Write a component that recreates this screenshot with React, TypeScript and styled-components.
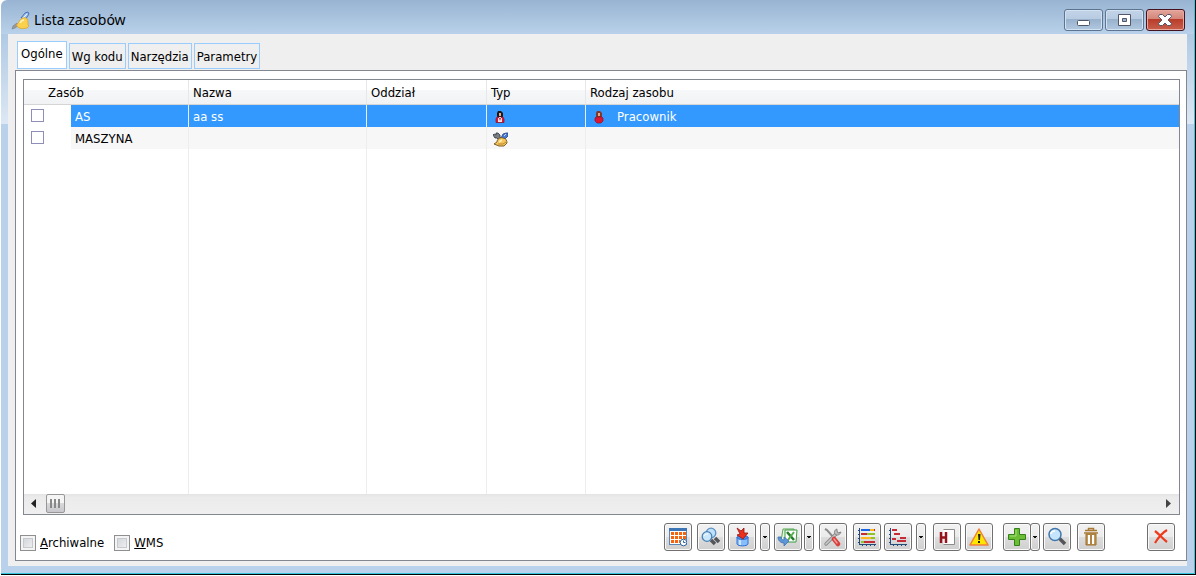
import React from "react";
import styled, { createGlobalStyle, css } from "styled-components";

const GlobalStyle = createGlobalStyle`
  * { box-sizing: border-box; }
  body {
    margin: 0;
    background: #fff;
    color: #000;
    font-family: "DejaVu Sans Condensed", Tahoma, "Noto Sans", sans-serif;
    font-size: 13px;
    line-height: 16px;
  }
  button, input { font: inherit; margin: 0; }
`;

const Desktop = styled.div`
  height: 100vh;
  padding: 0 0 1px 1px;
  background: #fff;
`;

const Frame = styled.div`
  height: 100%;
  display: flex;
  flex-direction: column;
  padding: 0 8px 8px 7px;
  border-right: 1px solid #000;
  border-bottom: 1px solid #000;
  border-top-left-radius: 6px;
  box-shadow: inset -1px -1px 0 #35c5dc;
  background:
    linear-gradient(transparent 34px, #b0cae4 34px, #dce8f4 124px, transparent 124px) left / 7px 100% no-repeat,
    linear-gradient(transparent 34px, #b0cae4 34px, #dce8f4 124px, transparent 124px) right / 8px 100% no-repeat,
    linear-gradient(#98b4d2, #b9d1ea 34px);
`;

const TitleBar = styled.header`
  display: flex;
  align-items: center;
  gap: 4px;
  height: 34px;
  padding: 6px 2px 0 3px;
`;

const Title = styled.h1`
  flex: 1;
  margin: 0;
  font: 14px/20px "Noto Sans", "Open Sans", sans-serif;
`;

const WindowButtons = styled.div`
  display: flex;
  gap: 2px;
`;

const WindowButton = styled.button<{ $close?: boolean }>`
  display: flex;
  align-items: center;
  justify-content: center;
  width: 39px;
  height: 22px;
  padding: 0 1px 0 0;
  border: 1px solid ${(p) => (p.$close ? "#43141f" : "#5c7591")};
  border-radius: 3px;
  box-shadow: inset 0 0 0 1px ${(p) => (p.$close ? "#e9a9a0" : "#d4e1f0")};
  background: ${(p) =>
    p.$close
      ? "linear-gradient(#e3a69c 0, #d48578 45%, #b83c29 46%, #c8604c 100%)"
      : "linear-gradient(#c3d4e8 0, #b7cbe1 45%, #98b1cc 46%, #b1c8e0 100%)"};
`;

const Client = styled.main`
  flex: 1;
  min-height: 0;
  display: flex;
  flex-direction: column;
  padding: 8px 0 5px 7px;
  background: #efefef;
`;

const Tabs = styled.div`
  display: flex;
  align-items: flex-end;
  gap: 2px;
  height: 28px;
  padding: 0 2px 1px;
`;

const Tab = styled.button<{ $active?: boolean }>`
  height: ${(p) => (p.$active ? 28 : 26)}px;
  padding: ${(p) => (p.$active ? "0 3px 2px" : "2px 2px 0")};
  border: 1px solid #99ccff;
  background: ${(p) => (p.$active ? "#fff" : "#efefef")};
  color: #000;
`;

const Panel = styled.section`
  flex: 1;
  min-height: 0;
  display: flex;
  flex-direction: column;
  padding: 8px 6px 0 7px;
  border: 1px solid #828790;
  background: #fff;
`;

const ListBox = styled.div`
  flex: 1;
  min-height: 0;
  display: flex;
  flex-direction: column;
  border: 1px solid #828790;
`;

const GridArea = styled.div`
  flex: 1;
  min-height: 0;
`;

const Grid = styled.table`
  width: 100%;
  height: 100%;
  table-layout: fixed;
  border-collapse: separate;
  border-spacing: 0;
`;

const HeadCell = styled.th<{ $first?: boolean }>`
  height: 25px;
  padding: 2px 4px 0 ${(p) => (p.$first ? 24 : 4)}px;
  border-right: 1px solid #e6e7e9;
  border-bottom: 1px solid #d5d5d5;
  background: linear-gradient(#fff 40%, #f7f8fa 41%, #f1f2f4);
  font-weight: normal;
  text-align: left;
  &:last-child { border-right: 0; }
`;

const Cell = styled.td<{ $state?: "selected" | "odd" }>`
  height: 22px;
  padding: 2px 4px 0;
  border-right: 1px solid #ededed;
  white-space: nowrap;
  &:last-child { border-right: 0; }
  ${(p) => p.$state === "selected" && css`background: #3399ff; color: #fff;`}
  ${(p) => p.$state === "odd" && css`background: #f7f7f7;`}
`;

const CheckCell = styled.td`
  height: 22px;
  padding: 0 7px 2px;
  background: #fff;
`;

const FillCell = styled.td`
  border-right: 1px solid #ededed;
  &:last-child { border-right: 0; }
`;

const CellContent = styled.span<{ $inset: number }>`
  display: flex;
  align-items: center;
  gap: 12px;
  padding-left: ${(p) => p.$inset}px;
`;

const RowCheck = styled.input`
  appearance: none;
  display: block;
  width: 13px;
  height: 13px;
  border: 1px solid #8e8fb8;
  background: #fff;
  &:checked { background: #3399ff; }
`;

const ScrollBar = styled.div`
  display: flex;
  align-items: flex-start;
  height: 20px;
  padding-right: 2px;
  background: linear-gradient(#e3e3e3, #ebebeb 3px, #efefef);
`;

const ScrollArrow = styled.button`
  display: flex;
  align-items: center;
  justify-content: center;
  width: 18px;
  height: 18px;
  padding: 0;
  border: 0;
  background: none;
`;

const ScrollTrack = styled.div`
  flex: 1;
  padding-left: 4px;
`;

const ScrollThumb = styled.div`
  display: flex;
  align-items: center;
  justify-content: center;
  width: 19px;
  height: 19px;
  border: 1px solid #979797;
  border-radius: 2px;
  background: linear-gradient(#f5f5f5 45%, #dadadc 46%, #c8c8cc);
`;

const Footer = styled.footer`
  display: flex;
  align-items: flex-start;
  justify-content: space-between;
  height: 45px;
  padding: 8px 5px 0 0;
`;

const Options = styled.div`
  display: flex;
  gap: 10px;
  margin-left: -3px;
  padding-top: 12px;
`;

const Option = styled.label`
  display: flex;
  align-items: center;
  gap: 4px;
`;

const OptionCheck = styled.input`
  appearance: none;
  width: 16px;
  height: 16px;
  border: 1px solid #8e8f8f;
  box-shadow: inset 0 0 0 2px #f4f4f4, inset 0 0 0 3px #c6cace;
  background: linear-gradient(135deg, #cbcfd5, #f6f6f6);
`;

const Toolbar = styled.div`
  display: flex;
  align-items: center;
`;

const ToolGroup = styled.div<{ $space?: number; $gap?: number }>`
  display: flex;
  gap: ${(p) => p.$gap ?? 0}px;
  margin-left: ${(p) => p.$space ?? 0}px;
`;

const ToolButton = styled.button<{ $drop?: boolean; $joined?: boolean }>`
  display: flex;
  align-items: center;
  justify-content: center;
  width: ${(p) => (p.$drop ? 10 : 28)}px;
  height: 28px;
  padding: 0;
  margin-left: ${(p) => (p.$joined ? -1 : 0)}px;
  border: 1px solid #707070;
  border-radius: 3px;
  box-shadow: inset 0 0 0 1px #fafafa;
  background: linear-gradient(#f2f2f2 0, #ebebeb 48%, #dddddd 50%, #cfcfcf 100%);
  svg { flex: none; }
`;

function Drop({ label, joined }: { label: string; joined?: boolean }) {
  return (
    <ToolButton $drop $joined={joined} aria-label={label}>
      <svg width="6" height="4" viewBox="0 0 6 4"><path d="M1 1h4v1H4v1H2V2H1z" fill="#111" /></svg>
    </ToolButton>
  );
}

const HelmetIcon = () => (
  <svg width="19" height="19" viewBox="0 0 19 19">
    <path d="M1 18l1-3 4-3 2 2-4 3z" fill="#9a9a9a" stroke="#7f8286" strokeWidth=".7" />
    <path d="M10 7l4-5 3-1 1 2-4 6z" fill="#9fc2ef" stroke="#4470b4" />
    <path d="M12 7l4-4" stroke="#e9f3ff" />
    <path d="M6 15c-1-2 1-2 2-4 1-3 4-5 7-4 2 1 2 4 2 7l1 1-2 2c-4 1-8 1-10-2z" fill="#fbd04c" stroke="#dba633" strokeWidth=".8" />
    <path d="M9 12c1-2 2-3 4-3" stroke="#fff1b8" strokeWidth="1.600" fill="none" />
  </svg>
);

const MachineIcon = () => (
  <svg width="15" height="15" viewBox="0 0 15 15">
    <path d="M0 3l1-1 2 1V1h2l2 2v2l2 2-2 2-3-3H2z" fill="#7a7f84" stroke="#30363c" strokeWidth=".8" />
    <path d="M8 6l2-4 3-1h2v3l-3 3-3 1z" fill="#4a7ad2" stroke="#1f4288" strokeWidth=".8" />
    <path d="M11 4l2-2" stroke="#c3daff" />
    <path d="M1 12l3-2c0-3 3-5 6-4 3 0 4 3 4 5l-3 3H6z" fill="#f7c65a" stroke="#70501b" strokeWidth=".9" />
    <path d="M6 10l3-2" stroke="#fff0b5" strokeWidth="1.600" />
    <path d="M5 12h5l3-2" stroke="#a8762a" strokeWidth=".8" fill="none" />
  </svg>
);

const PersonIcon = ({ round }: { round?: boolean }) => (
  <svg width="12" height="14" viewBox="0 0 12 14">
    <path d="M3 8V3l1-2h3l2 2v5z" fill={round ? "#7d3a2c" : "#1c1719"} />
    <path d={round ? "M2 8l1-1h6l1 1v3l-2 2H4l-2-2z" : "M2 12.500V9l1-2h6l1 2v3.500z"} fill="#dc1533" stroke="#8a1325" strokeWidth=".7" />
    <path d="M5 3h2v3H5z" fill="#e9a98a" />
    {!round && <path d="M5 7h2v1h1v4H4V8h1z" fill="#f6e4e6" />}
    {!round && <path d="M5 8h2l-1 3z" fill="#dc1533" />}
  </svg>
);

const CalendarIcon = () => (
  <svg width="18" height="20" viewBox="0 0 18 20">
    <rect x=".5" y="1.500" width="17" height="16" fill="#fff" stroke="#5b86b8" />
    <path d="M0 1h18v3H0z" fill="#3c75b5" />
    <path d="M2 6.500h15M2 10.500h15M2 14.500h9" stroke="#f5640f" strokeWidth="3" strokeDasharray="3 1" />
    <circle cx="14.500" cy="15.500" r="3.300" fill="#fff" stroke="#2f659f" />
    <path d="M14.500 13.500v2h2" stroke="#2f659f" fill="none" />
  </svg>
);

const DoubleLensIcon = () => (
  <svg width="20" height="20" viewBox="0 0 20 20">
    <path d="M10 13l4 4M14 11l4 4" stroke="#55565a" strokeWidth="3.500" />
    <circle cx="10" cy="6" r="4.800" fill="#bfe0fa" stroke="#5b90c2" strokeWidth="1.300" />
    <circle cx="6" cy="9.500" r="4.800" fill="#cae7fc" stroke="#4a80b4" strokeWidth="1.300" />
    <path d="M3 9c1-2 2-2 4-2" stroke="#fff" fill="none" />
  </svg>
);

const ImportIcon = () => (
  <svg width="18" height="20" viewBox="0 0 18 20">
    <path d="M4 10v7c1 2.500 10 2.500 11 0v-7z" fill="#86bdfb" stroke="#2b6ed3" />
    <path d="M7 12v6" stroke="#cfe5ff" strokeWidth="2" />
    <ellipse cx="9.500" cy="10.500" rx="5.500" ry="2" fill="#4d8fe8" stroke="#2b6ed3" />
    <path d="M4 1l4 3 3-3v5h4l-5 6-6-4 3-1z" fill="#e8301c" stroke="#9c1010" strokeWidth=".8" />
  </svg>
);

const ExcelIcon = () => (
  <svg width="22" height="20" viewBox="0 0 22 20">
    <path d="M6 2h11v12H4z" fill="#e4f4e0" stroke="#58a653" />
    <path d="M8 3h12l-1 12H8z" fill="#fff" stroke="#3a9a3c" />
    <path d="M10 5l7 8" stroke="#237a2a" strokeWidth="2.500" />
    <path d="M17 5l-6 8" stroke="#55b04c" strokeWidth="2" />
    <path d="M1 10c0 4 3 6 6 6v3l5-5-5-4v3c-2 0-3-1-3-3z" fill="#5e97d8" stroke="#3d71b3" strokeWidth=".8" />
  </svg>
);

const ToolsIcon = () => (
  <svg width="20" height="20" viewBox="0 0 20 20">
    <path d="M2 2l2 1 7 8" stroke="#8c8c8c" strokeWidth="2" fill="none" />
    <path d="M3 17L13 7" stroke="#8a8a8a" strokeWidth="3.400" strokeLinecap="round" />
    <path d="M3 17L13 7" stroke="#c9c9c9" strokeWidth="1.600" strokeLinecap="round" />
    <path d="M14 2c-3 1-3 4-2 5 2 2 5 1 6-2l-3 1-1-2z" fill="#bdbdbd" stroke="#858585" />
    <path d="M11 12l4 5" stroke="#d63f3b" strokeWidth="4.500" strokeLinecap="round" />
    <path d="M11 12l3 4" stroke="#f49a94" strokeWidth="1.500" strokeLinecap="round" />
  </svg>
);

const ChartAxes = () => (
  <path d="M2 1h1v16h16v1H2zM1 3h1v1H1zM1 7h1v1H1zM1 11h1v1H1zM1 15h1v1H1zM5 18h1v1H5zM9 18h1v1H9zM13 18h1v1h-1zM17 18h1v1h-1z" fill="#244c78" />
);

const BarsIcon = () => (
  <svg width="20" height="20" viewBox="0 0 20 20">
    <ChartAxes />
    <path d="M4 3h9" stroke="#1764e8" strokeWidth="2" />
    <path d="M13 3h4M4 11h10" stroke="#ffba17" strokeWidth="2" />
    <path d="M4 7h6M6 15h12" stroke="#c72b35" strokeWidth="2" />
    <path d="M10 7h8M14 11h4M4 15h3" stroke="#8cc42a" strokeWidth="2" />
    <path d="M17 3h1" stroke="#c72b35" strokeWidth="2" />
  </svg>
);

const GanttIcon = () => (
  <svg width="20" height="20" viewBox="0 0 20 20">
    <ChartAxes />
    <path d="M4 3h5M6 7h6M12 11h6M9 14h9M4 12h4" stroke="#c72b35" strokeWidth="2" />
  </svg>
);

const HIcon = () => (
  <svg width="18" height="18" viewBox="0 0 18 18">
    <path d="M5.500 1.500h11v15h-11" fill="#fff" stroke="#8b8b8b" />
    <path d="M3 4v11M8 4v11M3 9.500h5" stroke="#98141c" strokeWidth="2.500" />
  </svg>
);

const WarnIcon = () => (
  <svg width="22" height="20" viewBox="0 0 22 20">
    <path d="M11 2l9 16H2z" fill="#ffe600" stroke="#f07f3c" strokeWidth="1.500" strokeLinejoin="round" />
    <path d="M10 7h2.500l-.5 6h-1.500zM10 14h2v2h-2z" fill="#222" />
  </svg>
);

const PlusIcon = () => (
  <svg width="20" height="20" viewBox="0 0 20 20">
    <path d="M7.500 1.500h5v6h6v5h-6v6h-5v-6h-6v-5h6z" fill="#6cbd36" stroke="#36801c" />
    <path d="M9 3v6H3" stroke="#a4dd78" fill="none" />
  </svg>
);

const LensIcon = () => (
  <svg width="20" height="20" viewBox="0 0 20 20">
    <path d="M12 11l6 6" stroke="#55565a" strokeWidth="3.500" />
    <circle cx="8" cy="7.500" r="6" fill="#c5e5fc" stroke="#4377ab" strokeWidth="1.500" />
    <path d="M4 7c0-2 2-3 4-3" stroke="#fff" strokeWidth="1.500" fill="none" />
  </svg>
);

const TrashIcon = () => (
  <svg width="16" height="20" viewBox="0 0 16 20">
    <path d="M5.500 3V1.500h5V3M2 3.500h12M1 6h14" fill="none" stroke="#a87a35" strokeWidth="1.500" />
    <path d="M3 7h10v11H3z" fill="#c49a58" stroke="#9b6d2a" />
    <path d="M6 8v9M10 8v9" stroke="#fff" strokeWidth="2" />
    <path d="M8 8v9" stroke="#9b6d2a" />
  </svg>
);

const CrossIcon = () => (
  <svg width="16" height="16" viewBox="0 0 16 16">
    <path d="M2 2c4 3 8 8 12 11M14 1C9 4 5 9 2 14" stroke="#ee3a1c" strokeWidth="2.200" fill="none" />
  </svg>
);

const Grip = () => (
  <svg width="11" height="9" viewBox="0 0 11 9">
    <path d="M1 0v9M5 0v9M9 0v9" stroke="#888" strokeWidth="2" />
  </svg>
);

export default function App() {
  return (
    <>
      <GlobalStyle />
      <Desktop>
        <Frame>
          <TitleBar>
            <HelmetIcon />
            <Title>Lista zasobów</Title>
            <WindowButtons>
              <WindowButton aria-label="Minimalizuj">
                <svg width="14" height="12" viewBox="0 0 14 12"><rect x="1.500" y="6.500" width="12" height="5" rx="1" fill="#fff" stroke="#535666" /></svg>
              </WindowButton>
              <WindowButton aria-label="Maksymalizuj">
                <svg width="14" height="12" viewBox="0 0 14 12"><path d="M1.500.5h12v11h-12zM5.500 4.500v3h4v-3z" fill="#fff" fillRule="evenodd" stroke="#535666" /></svg>
              </WindowButton>
              <WindowButton $close aria-label="Zamknij">
                <svg width="14" height="12" viewBox="0 0 14 12"><path d="M1.500.5h3L7 3 9.500.5h3l1 2L10 6l3.500 3.500-1 2h-3L7 9l-2.500 2.500h-3l-1-2L4 6 .5 2.500z" fill="#fff" stroke="#535666" /></svg>
              </WindowButton>
            </WindowButtons>
          </TitleBar>
          <Client>
            <Tabs role="tablist">
              <Tab role="tab" aria-selected $active>Ogólne</Tab>
              <Tab role="tab">Wg kodu</Tab>
              <Tab role="tab">Narzędzia</Tab>
              <Tab role="tab">Parametry</Tab>
            </Tabs>
            <Panel>
              <ListBox>
                <GridArea>
                  <Grid>
                    <colgroup>
                      <col style={{ width: 47 }} />
                      <col style={{ width: 118 }} />
                      <col style={{ width: 178 }} />
                      <col style={{ width: 120 }} />
                      <col style={{ width: 99 }} />
                      <col />
                    </colgroup>
                    <thead>
                      <tr>
                        <HeadCell $first colSpan={2}>Zasób</HeadCell>
                        <HeadCell>Nazwa</HeadCell>
                        <HeadCell>Oddział</HeadCell>
                        <HeadCell>Typ</HeadCell>
                        <HeadCell>Rodzaj zasobu</HeadCell>
                      </tr>
                    </thead>
                    <tbody>
                      <tr>
                        <CheckCell><RowCheck type="checkbox" aria-label="AS" /></CheckCell>
                        <Cell $state="selected">AS</Cell>
                        <Cell $state="selected">aa ss</Cell>
                        <Cell $state="selected" />
                        <Cell $state="selected"><CellContent $inset={3}><PersonIcon /></CellContent></Cell>
                        <Cell $state="selected"><CellContent $inset={3}><PersonIcon round />Pracownik</CellContent></Cell>
                      </tr>
                      <tr>
                        <CheckCell><RowCheck type="checkbox" aria-label="MASZYNA" /></CheckCell>
                        <Cell $state="odd">MASZYNA</Cell>
                        <Cell $state="odd" />
                        <Cell $state="odd" />
                        <Cell $state="odd"><CellContent $inset={2}><MachineIcon /></CellContent></Cell>
                        <Cell $state="odd" />
                      </tr>
                      <tr>
                        <FillCell colSpan={2} />
                        <FillCell />
                        <FillCell />
                        <FillCell />
                        <FillCell />
                      </tr>
                    </tbody>
                  </Grid>
                </GridArea>
                <ScrollBar>
                  <ScrollArrow aria-label="Przewiń w lewo">
                    <svg width="5" height="9" viewBox="0 0 5 9"><path d="M5 0v9L0 4.500z" fill="#222" /></svg>
                  </ScrollArrow>
                  <ScrollTrack><ScrollThumb><Grip /></ScrollThumb></ScrollTrack>
                  <ScrollArrow aria-label="Przewiń w prawo">
                    <svg width="5" height="9" viewBox="0 0 5 9"><path d="M0 0v9l5-4.500z" fill="#444" /></svg>
                  </ScrollArrow>
                </ScrollBar>
              </ListBox>
              <Footer>
                <Options>
                  <Option><OptionCheck type="checkbox" /><span><u>A</u>rchiwalne</span></Option>
                  <Option><OptionCheck type="checkbox" /><span><u>W</u>MS</span></Option>
                </Options>
                <Toolbar>
                  <ToolButton aria-label="Kalendarz"><CalendarIcon /></ToolButton>
                  <ToolGroup $space={5} $gap={3}>
                    <ToolButton aria-label="Szukaj"><DoubleLensIcon /></ToolButton>
                    <ToolButton aria-label="Import"><ImportIcon /></ToolButton>
                  </ToolGroup>
                  <ToolGroup $space={4}>
                    <Drop label="Opcje importu" />
                  </ToolGroup>
                  <ToolGroup $space={4} $gap={2}>
                    <ToolButton aria-label="Excel"><ExcelIcon /></ToolButton>
                    <Drop label="Opcje Excel" />
                  </ToolGroup>
                  <ToolGroup $space={5}>
                    <ToolButton aria-label="Narzędzia"><ToolsIcon /></ToolButton>
                  </ToolGroup>
                  <ToolGroup $space={6} $gap={3}>
                    <ToolButton aria-label="Obciążenie"><BarsIcon /></ToolButton>
                    <ToolButton aria-label="Harmonogram"><GanttIcon /></ToolButton>
                  </ToolGroup>
                  <ToolGroup $space={4}>
                    <Drop label="Opcje harmonogramu" />
                  </ToolGroup>
                  <ToolGroup $space={7} $gap={4}>
                    <ToolButton aria-label="Historia"><HIcon /></ToolButton>
                    <ToolButton aria-label="Ostrzeżenia"><WarnIcon /></ToolButton>
                  </ToolGroup>
                  <ToolGroup $space={10}>
                    <ToolButton aria-label="Dodaj"><PlusIcon /></ToolButton>
                    <Drop label="Opcje dodawania" joined />
                  </ToolGroup>
                  <ToolGroup $space={3} $gap={6}>
                    <ToolButton aria-label="Podgląd"><LensIcon /></ToolButton>
                    <ToolButton aria-label="Usuń"><TrashIcon /></ToolButton>
                  </ToolGroup>
                  <ToolGroup $space={42}>
                    <ToolButton aria-label="Zamknij okno"><CrossIcon /></ToolButton>
                  </ToolGroup>
                </Toolbar>
              </Footer>
            </Panel>
          </Client>
        </Frame>
      </Desktop>
    </>
  );
}
